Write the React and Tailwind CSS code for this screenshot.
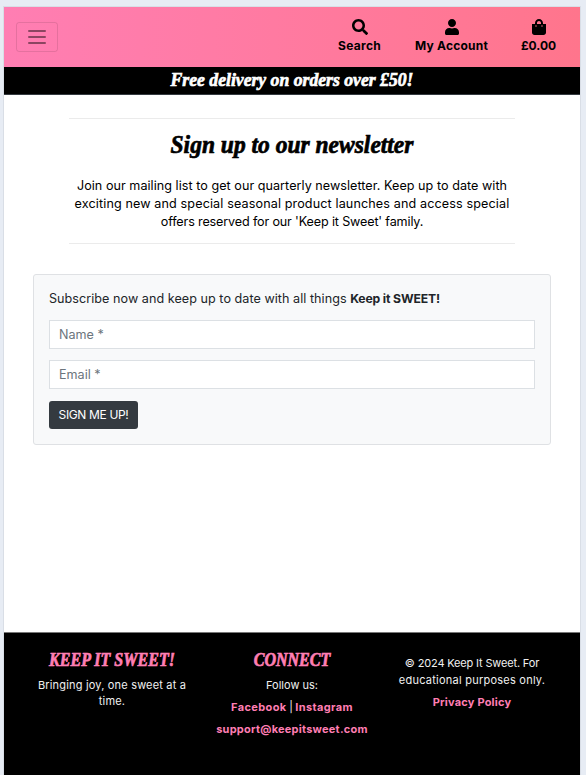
import { FaSearch, FaUser, FaShoppingBag } from "react-icons/fa";

const display =
  "font-['Liberation_Serif',serif] font-bold italic [-webkit-text-stroke:0.7px_currentColor] whitespace-nowrap";

function NavItem({ icon: Icon, label, className }) {
  return (
    <a className={`flex flex-col items-center whitespace-nowrap text-[12px] leading-[18px] font-bold text-black ${className}`}>
      <Icon className="mb-[2px] size-4" />
      <span>{label}</span>
    </a>
  );
}

function Header() {
  return (
    <header className="flex h-[60px] items-start bg-linear-to-r from-[#ff7eb3] to-[#ff758c]">
      <button className="mt-[15px] ml-3 flex h-[30px] w-[42px] flex-col items-center justify-center gap-[4px] rounded-[3px] border border-black/10">
        <span className="h-[2px] w-[18px] rounded-[1px] bg-black/45" />
        <span className="h-[2px] w-[18px] rounded-[1px] bg-black/45" />
        <span className="h-[2px] w-[18px] rounded-[1px] bg-black/45" />
      </button>
      <nav className="mt-3 mr-6 ml-auto flex">
        <NavItem icon={FaSearch} label="Search" className="w-[44px] pl-px tracking-[0.3px]" />
        <NavItem icon={FaUser} label="My Account" className="ml-[33px] w-[74px] pl-px tracking-[0.22px]" />
        <NavItem icon={FaShoppingBag} label="£0.00" className="ml-[33px] w-[35px]" />
      </nav>
    </header>
  );
}

function Intro() {
  return (
    <section className="mx-[65px] mt-[23px] h-[126px] w-[446px] border-y border-black/8 text-center text-black">
      <h1 className={`${display} mt-[11px] scale-x-94 text-[25px] leading-[30px]`}>Sign up to our newsletter</h1>
      <p className="mt-[17px] text-[12.6px] leading-[18px] whitespace-nowrap">
        <span className="tracking-[0.04px]">
          Join our mailing list to get our quarterly newsletter. Keep up to date with
        </span>
        <br />
        <span className="tracking-[0.12px]">
          exciting new and special seasonal product launches and access special
        </span>
        <br />
        <span className="tracking-[-0.15px]">offers reserved for our 'Keep it Sweet' family.</span>
      </p>
    </section>
  );
}

function Signup() {
  const field =
    "block h-[29px] w-full border border-[#dce0e4] bg-white px-[9px] text-[12.6px] text-[#6c757d] placeholder:text-[#6c757d] placeholder:opacity-100";
  return (
    <form className="mx-[29px] mt-[30px] h-[171px] rounded-[3px] border border-[#dfe1e4] bg-[#f8f9fa] px-[15px] pt-[15px] text-[#212529]">
      <p className="mb-[12px] text-[12.6px] leading-[18px] tracking-[0.04px] whitespace-nowrap">
        Subscribe now and keep up to date with all things{" "}
        <strong className="text-[12.2px] tracking-[-0.15px]">Keep it SWEET!</strong>
      </p>
      <input className={field} placeholder="Name *" />
      <input className={`${field} mt-[11px]`} placeholder="Email *" />
      <button type="button" className="mt-3 h-[28px] w-[89px] rounded-[3px] bg-[#343a40] text-[12px] tracking-[-0.35px] whitespace-nowrap text-white">
        SIGN ME UP!
      </button>
    </form>
  );
}

function Footer() {
  const link = "font-bold text-[#ff7eb3]";
  return (
    <footer className="mt-auto grid h-[143px] grid-cols-[180px_180px_180px] justify-center border-t border-[#777] bg-black pt-[16px] text-center text-[11px] leading-4 whitespace-nowrap text-[#f0f0f0]">
      <div>
        <h2 className={`${display} scale-x-89 text-[18px] leading-[23px] text-[#ff7eb3]`}>KEEP IT SWEET!</h2>
        <p className="mt-[5px] tracking-[0.18px]">
          Bringing joy, one sweet at a
          <br />
          time.
        </p>
      </div>
      <div>
        <h2 className={`${display} scale-x-89 text-[18px] leading-[23px] text-[#ff7eb3]`}>CONNECT</h2>
        <p className="mt-[5px]">Follow us:</p>
        <p className="mt-[6px] tracking-[0.38px]">
          <a className={link}>Facebook</a>
          <span className="tracking-[-0.4px]"> | </span>
          <a className={link}>Instagram</a>
        </p>
        <p className="mt-[6px] tracking-[0.24px]">
          <a className={link}>support@keepitsweet.com</a>
        </p>
      </div>
      <div className="pt-[6px]">
        <p className="leading-[17px]">
          <span className="tracking-[-0.16px]">© 2024 Keep It Sweet. For</span>
          <br />
          <span className="tracking-[0.24px]">educational purposes only.</span>
        </p>
        <p className="mt-[5px] tracking-[0.2px]">
          <a className={link}>Privacy Policy</a>
        </p>
      </div>
    </footer>
  );
}

export default function App() {
  return (
    <div className="h-[775px] w-[586px] overflow-hidden bg-[#e7ecf4] pt-[7px] pl-1 font-['Inter',sans-serif]">
      <div className="flex h-[768px] w-[576px] flex-col bg-white shadow-[0_0_0_1px_#d9dee6]">
        <Header />
        <div className="h-[28px] border-b border-[#343a40] bg-black text-center text-white">
          <p className={`${display} scale-x-93 text-[19px] leading-[25px]`}>Free delivery on orders over £50!</p>
        </div>
        <Intro />
        <Signup />
        <Footer />
      </div>
    </div>
  );
}
